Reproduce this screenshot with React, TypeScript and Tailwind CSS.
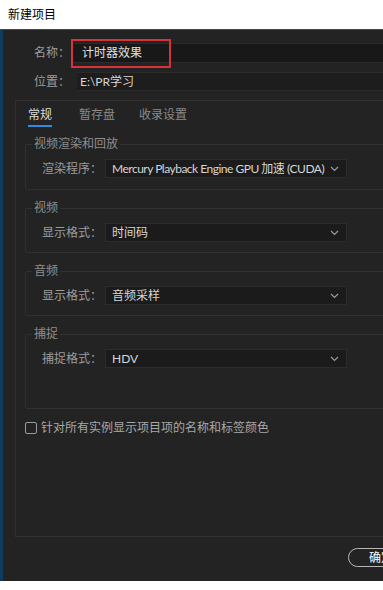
import React from "react";

const font = { fontFamily: '"Noto Sans", "Noto Sans CJK SC", sans-serif' };
const latin = { fontFamily: 'Lato, "Noto Sans CJK SC", sans-serif' };

function Chevron() {
  return (
    <svg width="9" height="6" viewBox="0 0 9 6" className="shrink-0">
      <path d="M1 1 L4.5 4.5 L8 1" fill="none" stroke="#9a9a9a" strokeWidth="1.2" />
    </svg>
  );
}

function Dropdown({ label, value, tight }: { label: string; value: string; tight?: boolean }) {
  return (
    <div className="flex items-center">
      <div className="w-[77px] text-right text-[12px] leading-[16px] text-[#9c9c9c] pr-[1px]">{label}</div>
      <div className="ml-[2px] w-[242px] h-[19px] bg-[#1b1b1b] border border-[#2c2c2c] flex items-center justify-between pl-[6px] pr-[7px]">
        <span
          className={tight ? "text-[12px] leading-[16px] text-[#d6d6d6] whitespace-nowrap tracking-[-0.5px]" : "text-[12px] leading-[16px] text-[#d6d6d6] whitespace-nowrap"}
          style={latin}
        >
          {value}
        </span>
        <Chevron />
      </div>
    </div>
  );
}

function Group({ title, h, children }: { title: string; h: string; children: React.ReactNode }) {
  return (
    <div className={`relative ml-[9px] border border-[#303030] rounded-[2px] ${h}`}>
      <span className="absolute -top-[9px] left-[6px] px-[2px] bg-[#232323] text-[12px] leading-[16px] text-[#8e8e8e]">{title}</span>
      <div className="pt-[14px]">{children}</div>
    </div>
  );
}

export default function App() {
  return (
    <div className="w-[383px] h-[590px] bg-white overflow-hidden" style={font}>
      <div className="h-[30px] flex items-center pl-[8px] text-[12px] text-black border-b border-[#4a4a4a]">新建项目</div>
      <div className="relative h-[551px] bg-[#232323] border-l-[3px] border-[#0f3b5c] overflow-hidden">
        <div className="pt-[13px] flex items-center">
          <div className="w-[67px] text-right text-[12px] leading-[16px] text-[#9c9c9c]">名称：</div>
          <div className="ml-[3px] flex-1 h-[20px] bg-[#181818] border-y border-[#2a2a2a] flex items-center pl-[9px] text-[12px] text-[#e0e0e0]">计时器效果</div>
        </div>
        <div className="absolute left-[68px] top-[9px] w-[100px] h-[29px] border-2 border-[#d5323a]" />
        <div className="mt-[9px] flex items-center">
          <div className="w-[67px] text-right text-[12px] leading-[16px] text-[#9c9c9c]">位置：</div>
          <div className="ml-[7px] flex-1 h-[19px] bg-[#1d1d1d] border-y border-[#2a2a2a] flex items-center pl-[3px] text-[12px] text-[#d6d6d6]" style={latin}>E:\PR学习</div>
        </div>
        <div className="mt-[9px] ml-[12px] w-[420px] h-[437px] border border-[#303030] flex flex-col">
          <div className="flex pt-[6px] pl-[12px] text-[12px] leading-[16px]">
            <div className="flex flex-col items-center">
              <span className="text-[#dcdcdc]">常规</span>
              <div className="mt-[2px] w-[24px] h-[2px] bg-[#2f8ae0]" />
            </div>
            <span className="ml-[27px] text-[#8a8a8a]">暂存盘</span>
            <span className="ml-[24px] text-[#8a8a8a]">收录设置</span>
          </div>
          <div className="mt-[17px] flex flex-col gap-[18px]">
            <Group title="视频渲染和回放" h="h-[46px]">
              <Dropdown label="渲染程序：" value="Mercury Playback Engine GPU 加速 (CUDA)" tight />
            </Group>
            <Group title="视频" h="h-[45px]">
              <Dropdown label="显示格式：" value="时间码" />
            </Group>
            <Group title="音频" h="h-[45px]">
              <Dropdown label="显示格式：" value="音频采样" />
            </Group>
            <Group title="捕捉" h="h-[75px]">
              <Dropdown label="捕捉格式：" value="HDV" />
            </Group>
          </div>
          <div className="mt-[11px] ml-[9px] flex items-center">
            <div className="w-[12px] h-[12px] border-[1.5px] border-[#9a9a9a] rounded-[2px]" />
            <span className="ml-[4px] text-[12px] leading-[16px] text-[#a8a8a8]">针对所有实例显示项目项的名称和标签颜色</span>
          </div>
        </div>
        <div className="mt-[11px] ml-[345px] w-[80px] h-[19px] border-[1.5px] border-[#b8b8b8] rounded-full flex items-center pl-[20px] text-[12px] text-white">确定</div>
      </div>
    </div>
  );
}
